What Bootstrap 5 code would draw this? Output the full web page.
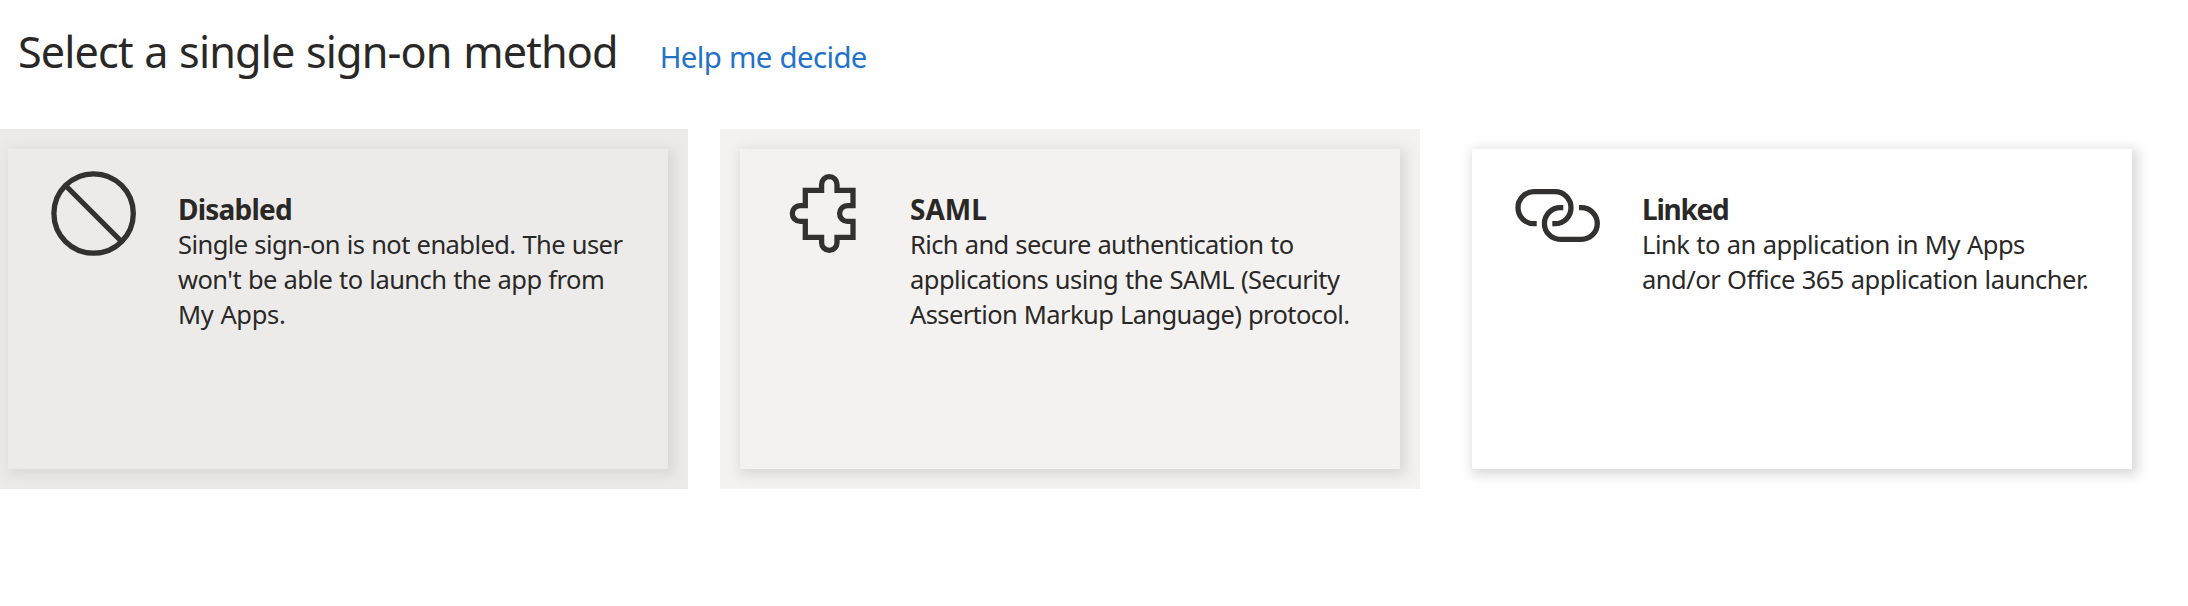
<!DOCTYPE html>
<html lang="en">
<head>
<meta charset="utf-8">
<meta name="viewport" content="width=device-width, initial-scale=1">
<title>Single sign-on</title>
<link href="https://cdn.jsdelivr.net/npm/bootstrap@5.3.0/dist/css/bootstrap.min.css" rel="stylesheet">
<style>
  body { font-family: "Noto Sans", "Open Sans", sans-serif; color: #292827; background: #fff; }
  .page-head { height: 129px; padding: 22px 0 0 18px; }
  .page-title { font-size: 43.2px; line-height: 60px; font-weight: 400; letter-spacing: -.875px; word-spacing: 1.2px; }
  .help-link { font-size: 29.4px; line-height: 40px; letter-spacing: -.63px; word-spacing: .8px; color: #2472c8; margin-left: 42px; }
  .methods { gap: 32px; margin-left: -12px; width: 2164px; }
  .pane { width: 700px; height: 360px; padding: 20px; }
  .pane-selected { background: #ecebe9; }
  .pane-hover { background: #f3f2f0; }
  .method { height: 320px; background: inherit; border: 0; border-radius: 0; color: inherit; box-shadow: 3px 3px 11px 3px rgba(215, 214, 215, .9); }
  .method svg { width: 86px; height: 86px; margin: 22px 41px 0 43px; fill: none; stroke: #323130; stroke-width: 5.3; }
  .method-text { padding-top: 43px; font-size: 25.5px; line-height: 35px; word-spacing: .7px; white-space: nowrap; }
  .method-title { font-size: 28px; line-height: 35px; font-weight: 700; }
</style>
</head>
<body class="overflow-hidden">
<header class="page-head d-flex align-items-baseline">
  <h1 class="page-title m-0">Select a single sign-on method</h1>
  <a class="help-link text-decoration-none" href="#">Help me decide</a>
</header>
<main class="methods d-flex">
  <div class="pane pane-selected flex-shrink-0">
    <div class="method card flex-row align-items-start">
      <svg class="flex-shrink-0" viewBox="0 0 86 86" aria-hidden="true"><circle cx="42.6" cy="42.5" r="39.7"/><path d="M15 15 70.5 70.5"/></svg>
      <div class="method-text">
        <h2 class="method-title m-0" style="letter-spacing:-.79px">Disabled</h2>
        <div style="letter-spacing:-.57px">Single sign-on is not enabled. The user</div>
        <div style="letter-spacing:-.56px">won't be able to launch the app from</div>
        <div style="letter-spacing:-.35px">My Apps.</div>
      </div>
    </div>
  </div>
  <div class="pane pane-hover flex-shrink-0">
    <div class="method card flex-row align-items-start">
      <svg class="flex-shrink-0" viewBox="0 0 86 86" aria-hidden="true"><path d="M22.3 19.3H38.6V13.3A7.7 7.7 0 0 1 54 13.3V19.3H70V34.7H64.4A7.8 7.8 0 0 0 64.4 50.3H70V66.4H54V71.7A7.7 7.7 0 0 1 38.6 71.7V66.4H22.3V50.3H17.1A7.8 7.8 0 0 1 17.1 34.7H22.3Z"/></svg>
      <div class="method-text">
        <h2 class="method-title m-0">SAML</h2>
        <div style="letter-spacing:-.61px">Rich and secure authentication to</div>
        <div style="letter-spacing:-.54px">applications using the SAML (Security</div>
        <div style="letter-spacing:-.61px">Assertion Markup Language) protocol.</div>
      </div>
    </div>
  </div>
  <div class="pane flex-shrink-0 bg-white">
    <div class="method card flex-row align-items-start">
      <svg class="flex-shrink-0" viewBox="0 0 86 86" aria-hidden="true"><path d="M21.7 52.7H19A16 16 0 0 1 19 20.7H40A16 16 0 0 1 40 52.7H37.3M48.3 36.6H45.3A15.9 15.9 0 0 0 45.3 68.4H66.4A15.9 15.9 0 0 0 66.4 36.6H64"/></svg>
      <div class="method-text">
        <h2 class="method-title m-0" style="letter-spacing:-1.25px">Linked</h2>
        <div style="letter-spacing:-.48px">Link to an application in My Apps</div>
        <div style="letter-spacing:-.49px">and/or Office 365 application launcher.</div>
      </div>
    </div>
  </div>
</main>
<script src="https://cdn.jsdelivr.net/npm/bootstrap@5.3.0/dist/js/bootstrap.bundle.min.js"></script>
</body>
</html>
